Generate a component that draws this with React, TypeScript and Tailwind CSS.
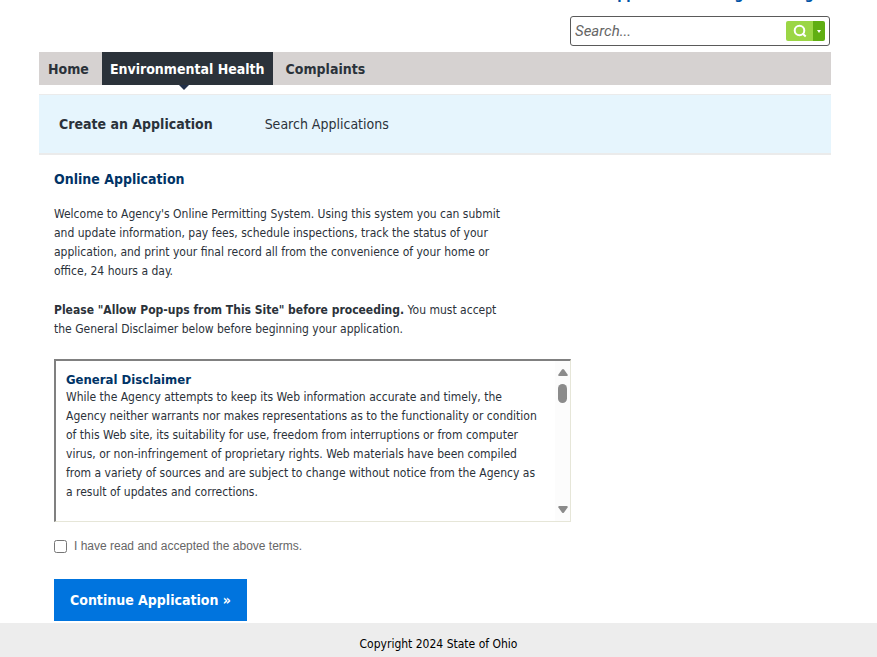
import { ChangeEvent, useState } from "react"

const body = "text-[12px] leading-[19px] text-[#2b323a]"

const TopLinks = () => (
    <div className="flex h-[2px] items-end justify-end gap-3 overflow-hidden pr-1 text-[14px] leading-4 font-bold text-[#0054a6]">
        <a href="#support" className="mr-12">Support</a>
        <a href="#register">Register</a>
        <a href="#login">Login</a>
    </div>
)

const SearchBox = () => (
    <form className="mt-[14px] mr-px ml-auto flex h-[30px] w-[260px] items-center rounded-[3px] border border-[#5a5a5a] px-1">
        <input
            type="text"
            aria-label="Search"
            placeholder="Search..."
            className="min-w-0 flex-1 font-[Roboto,sans-serif] text-[15px] italic outline-none placeholder:text-[#666]"
        />
        <button type="button" aria-label="Search" className="flex h-5 w-[27px] items-center justify-center rounded-l-[2px] bg-[#9bd645]">
            <svg width="14" height="14" viewBox="0 0 14 14" fill="none" stroke="white" strokeWidth="2">
                <circle cx="6.5" cy="6.5" r="4.8" />
                <path d="M9.5 9.5l3.2 3" />
            </svg>
        </button>
        <button type="button" aria-label="Search options" className="flex h-5 w-3 items-center justify-center rounded-r-[2px] bg-[#60ae12]">
            <svg width="4" height="3" viewBox="0 0 4 3" fill="white">
                <path d="M0 0h4L2 3z" />
            </svg>
        </button>
    </form>
)

const MainNav = () => (
    <nav className="mt-[6px] flex h-[33px] items-stretch bg-[#d6d2d1] text-[14px] leading-[34px] font-bold text-[#2b323a]">
        <a href="#home" className="pr-[13px] pl-[9px]">Home</a>
        <a href="#health" className="relative bg-[#2b323a] px-2 text-white">
            Environmental Health
            <svg className="absolute top-full left-1/2 -ml-2" width="10" height="5" viewBox="0 0 10 5" fill="#22304a">
                <path d="M0 0h10L5 5z" />
            </svg>
        </a>
        <a href="#complaints" className="px-[13px]">Complaints</a>
    </nav>
)

const SubNav = () => (
    <nav className="mt-[9px] flex h-[61px] items-center gap-[52px] border-t border-b-2 border-[#ebebeb] bg-[#e6f5fd] px-5 pt-px text-[14px] text-[#2b323a]">
        <a href="#create" className="font-bold">Create an Application</a>
        <a href="#search">Search Applications</a>
    </nav>
)

const Disclaimer = () => (
    <section className="mt-5 flex h-[163px] w-[517px] max-w-full border-t-2 border-r border-b border-l-2 border-t-[#808080] border-r-[#e6e6d8] border-b-[#e6e6d8] border-l-[#808080]">
        <div className="flex-1 overflow-hidden pt-[10px] pl-[10px]">
            <h2 className="text-[13px] leading-[17px] font-bold text-[#003366]">General Disclaimer</h2>
            <p className={body}>
                While the Agency attempts to keep its Web information accurate and timely, the<br />
                Agency neither warrants nor makes representations as to the functionality or condition<br />
                of this Web site, its suitability for use, freedom from interruptions or from computer<br />
                virus, or non-infringement of proprietary rights. Web materials have been compiled<br />
                from a variety of sources and are subject to change without notice from the Agency as<br />
                a result of updates and corrections.
            </p>
        </div>
        <div className="flex w-[15px] flex-col items-center bg-[#fcfcfc] py-2">
            <svg width="10" height="7" viewBox="0 0 10 7" fill="#8b8b8b">
                <path d="M4 .6q1-1.2 2 0L9.6 5.5Q10 7 8.8 7H1.2Q0 7 .4 5.5z" />
            </svg>
            <div className="mt-2 h-[19px] w-[9px] rounded-full bg-[#8b8b8b]" />
            <svg className="mt-auto" width="10" height="7" viewBox="0 0 10 7" fill="#8b8b8b">
                <path d="M4 6.4q1 1.2 2 0L9.6 1.5Q10 0 8.8 0H1.2Q0 0 .4 1.5z" />
            </svg>
        </div>
    </section>
)

export default function App() {
    const [accepted, setAccepted] = useState(false)

    return (
        <div className="flex min-h-screen flex-col bg-white font-['DejaVu_Sans_Condensed','DejaVu_Sans',sans-serif]">
            <div className="mr-[46px] ml-[39px]">
                <TopLinks />
                <SearchBox />
                <MainNav />
                <SubNav />
                <main className="px-[15px] pt-[14px]">
                    <h1 className="text-[14px] leading-5 font-bold text-[#003366]">Online Application</h1>
                    <p className={`${body} mt-4`}>
                        Welcome to Agency's Online Permitting System. Using this system you can submit<br />
                        and update information, pay fees, schedule inspections, track the status of your<br />
                        application, and print your final record all from the convenience of your home or<br />
                        office, 24 hours a day.
                    </p>
                    <p className={`${body} mt-5`}>
                        <strong>Please "Allow Pop-ups from This Site" before proceeding.</strong> You must accept<br />
                        the General Disclaimer below before beginning your application.
                    </p>
                    <Disclaimer />
                    <div className="mt-4 flex h-4 items-center gap-[7px] font-['Liberation_Sans',sans-serif] text-[12px] text-[#666]">
                        <input
                            id="terms"
                            type="checkbox"
                            checked={accepted}
                            onChange={(e: ChangeEvent<HTMLInputElement>) => setAccepted(e.target.checked)}
                            className="h-[13px] w-[13px]"
                        />
                        <label htmlFor="terms">I have read and accepted the above terms.</label>
                    </div>
                    <button type="button" className="mt-[25px] block h-[42px] bg-[#0074de] px-4 text-[14px] font-bold text-white">
                        Continue Application »
                    </button>
                </main>
            </div>
            <footer className="mt-[2px] flex-1 bg-[#ededed] pt-[13px] text-center text-[12px] leading-4 text-black">
                Copyright 2024 State of Ohio
            </footer>
        </div>
    )
}
